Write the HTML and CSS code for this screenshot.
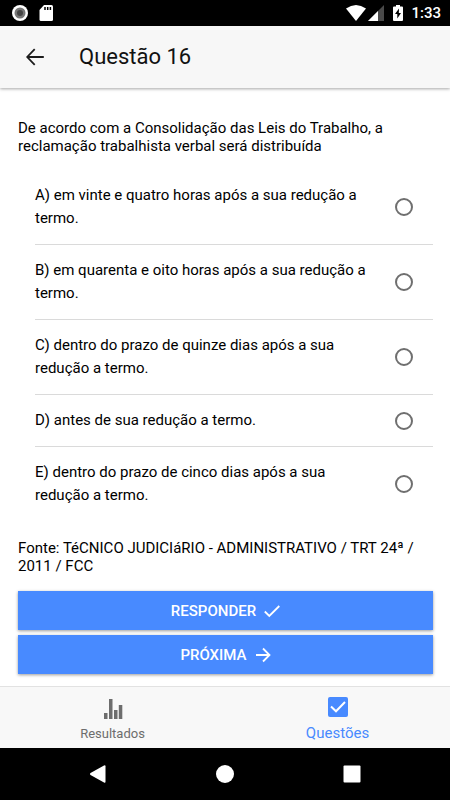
FILE: index.html
```html
<!DOCTYPE html>
<html lang="pt-BR">
<head>
<meta charset="utf-8">
<meta name="viewport" content="width=device-width, initial-scale=1">
<title>Questão 16</title>
<link rel="stylesheet" href="styles.css">
</head>
<body>
<div class="status">
  <div class="status-group status-left">
    <svg width="16" height="16" viewBox="0 0 16 16" aria-hidden="true"><circle cx="8" cy="8" r="8" fill="#fff"/><circle cx="8" cy="8" r="5.500" fill="#777"/><circle cx="8" cy="8" r="3" fill="#444"/></svg>
    <svg width="14" height="16" viewBox="0 0 14 16" aria-hidden="true"><path d="M5 0h7.500Q14 0 14 1.500V14.500Q14 16 12.500 16H2Q.5 16 .5 14.500V5z" fill="#fff"/><path d="M6 2v3M8.700 2v3M11.400 2v3" stroke="#000" stroke-width="1.500"/></svg>
  </div>
  <div class="status-group">
    <svg width="20" height="16" viewBox="0 0 20 16" aria-hidden="true"><path d="M0 3.500Q10-3.500 20 3.500L10 16z" fill="#fff"/></svg>
    <svg width="16" height="16" viewBox="0 0 16 16" aria-hidden="true"><path d="M16 0v16H0z" fill="#4a4a4a"/><path d="M10 6v10H0z" fill="#fff"/></svg>
    <svg class="battery" width="10" height="16" viewBox="0 0 10 16" aria-hidden="true"><path d="M3 0h4v1.500h2q1 0 1 1V15q0 1-1 1H1q-1 0-1-1V2.500q0-1 1-1h2z" fill="#fff"/><path d="M6 3.500 2 9h2.300v4.500L8 8H5.800z" fill="#000"/></svg>
    <span class="clock">1:33</span>
  </div>
</div>
<header class="toolbar">
  <button class="back" type="button" aria-label="Voltar">
    <svg width="18" height="18" viewBox="0 0 18 18" aria-hidden="true"><path d="M8.700 1.200 1.200 9l7.500 7.800M1.200 9h16.600" fill="none" stroke="#1c1c1c" stroke-width="1.800"/></svg>
  </button>
  <h1>Questão 16</h1>
</header>
<main>
  <form>
    <p id="question">De acordo com a Consolidação das Leis do Trabalho, a reclamação trabalhista verbal será distribuída</p>
    <div class="options" role="radiogroup" aria-labelledby="question">
      <label class="option"><span>A) em vinte e quatro horas após a sua redução a termo.</span><input type="radio" name="answer" value="A"></label>
      <label class="option"><span>B) em quarenta e oito horas após a sua redução a termo.</span><input type="radio" name="answer" value="B"></label>
      <label class="option"><span>C) dentro do prazo de quinze dias após a sua redução a termo.</span><input type="radio" name="answer" value="C"></label>
      <label class="option"><span>D) antes de sua redução a termo.</span><input type="radio" name="answer" value="D"></label>
      <label class="option"><span>E) dentro do prazo de cinco dias após a sua redução a termo.</span><input type="radio" name="answer" value="E"></label>
    </div>
    <p>Fonte: TéCNICO JUDICIáRIO - ADMINISTRATIVO / TRT 24ª / 2011 / FCC</p>
    <div class="actions">
      <button class="action" type="button">RESPONDER
        <svg width="16" height="16" viewBox="0 0 16 16" aria-hidden="true"><path d="M.8 8.500 5.300 13 15.300 3" fill="none" stroke="#fff" stroke-width="1.800"/></svg>
      </button>
      <button class="action" type="button">PRÓXIMA
        <svg width="16" height="16" viewBox="0 0 16 16" aria-hidden="true"><path d="M1 8h13.500M8 1.500 14.500 8 8 14.500" fill="none" stroke="#fff" stroke-width="1.800"/></svg>
      </button>
    </div>
  </form>
</main>
<nav class="tabs">
  <a class="tab" href="#resultados">
    <svg width="20" height="20" viewBox="0 0 20 20" aria-hidden="true"><path d="M1 14h3.500v6H1zM6 0h3.500v20H6zM11 11h3.500v9H11zM15.800 6h3.500v14h-3.500z" fill="#6d6d6d"/></svg>
    <span>Resultados</span>
  </a>
  <a class="tab active" href="#questoes" aria-current="page">
    <svg width="20" height="20" viewBox="0 0 20 20" aria-hidden="true"><rect width="20" height="20" rx="2" fill="#488aff"/><path d="M3 9.500 8 14.300 17 5" fill="none" stroke="#fff" stroke-width="2"/></svg>
    <span>Questões</span>
  </a>
</nav>
<div class="system">
  <button type="button" aria-label="Voltar"><svg width="18" height="18" viewBox="0 0 18 18" aria-hidden="true"><path d="M15 .5Q16.500-.3 16.500 1.200v15.600q0 1.500-1.500.7L1.500 10q-1-1 0-2z" fill="#fff"/></svg></button>
  <button type="button" aria-label="Início"><svg width="18" height="18" viewBox="0 0 18 18" aria-hidden="true"><circle cx="9" cy="9" r="9" fill="#fff"/></svg></button>
  <button type="button" aria-label="Recentes"><svg width="18" height="18" viewBox="0 0 18 18" aria-hidden="true"><rect x=".5" y=".5" width="17" height="17" rx="1" fill="#fff"/></svg></button>
</div>
</body>
</html>
```
FILE: styles.css
```css
* { box-sizing: border-box; }

body {
  margin: 0;
  min-height: 100vh;
  display: flex;
  flex-direction: column;
  background: #fff;
  color: #000;
  font-family: Roboto, sans-serif;
  font-size: 15px;
  line-height: 18px;
}

svg { display: block; flex: none; }

button {
  border: 0;
  padding: 0;
  background: none;
  font: inherit;
}

.status {
  display: flex;
  justify-content: space-between;
  height: 26px;
  padding: 0 9px 0 12px;
  background: #000;
  color: #fff;
}

.status-group { display: flex; align-items: center; gap: 2px; }
.status-left { gap: 11px; }
.battery { margin: 0 6px 0 7px; }
.clock { font-size: 15px; font-weight: 500; }

.toolbar {
  display: flex;
  align-items: center;
  gap: 35px;
  height: 62px;
  padding: 0 26px;
  background: #f7f7f7;
  box-shadow: 0 1px 3px rgba(0, 0, 0, .35);
}

h1 {
  margin: 0;
  color: #111;
  font-size: 22px;
  font-weight: 400;
  line-height: 28px;
}

main { flex: 1; padding: 31px 17px 11px 18px; }

p { margin: 0; }

.options { padding: 15px 0 18px; }

.option {
  display: flex;
  align-items: center;
  gap: 16px;
  margin-left: 17px;
  padding: 14px 20px 14px 0;
  border-bottom: 1px solid #dadada;
  line-height: 23px;
}

.option:last-child { border-bottom: 0; }
.option span { flex: 1; }

.option input {
  appearance: none;
  width: 18px;
  height: 18px;
  margin: 0;
  border: 2px solid #6f6f6f;
  border-radius: 50%;
}

.option input:checked { border-color: #488aff; background: radial-gradient(#488aff 45%, transparent 50%); }

.actions { display: grid; gap: 5px; padding-top: 16px; }

.action {
  display: flex;
  align-items: center;
  justify-content: center;
  gap: 8px;
  height: 39px;
  background: #488aff;
  color: #fff;
  font-weight: 500;
  box-shadow: 0 1px 3px rgba(0, 0, 0, .4);
}

.tabs {
  display: flex;
  height: 62px;
  border-top: 1px solid #e2e2e2;
  background: #f8f8f8;
}

.tab {
  flex: 1;
  display: flex;
  flex-direction: column;
  align-items: center;
  justify-content: flex-end;
  gap: 6px;
  padding-bottom: 5px;
  color: #6d6d6d;
  font-size: 13px;
  text-decoration: none;
}

.tab.active { padding-bottom: 6px; gap: 7px; color: #488aff; font-size: 15px; }

.system {
  display: flex;
  justify-content: center;
  gap: 109px;
  height: 52px;
  background: #000;
}
```
